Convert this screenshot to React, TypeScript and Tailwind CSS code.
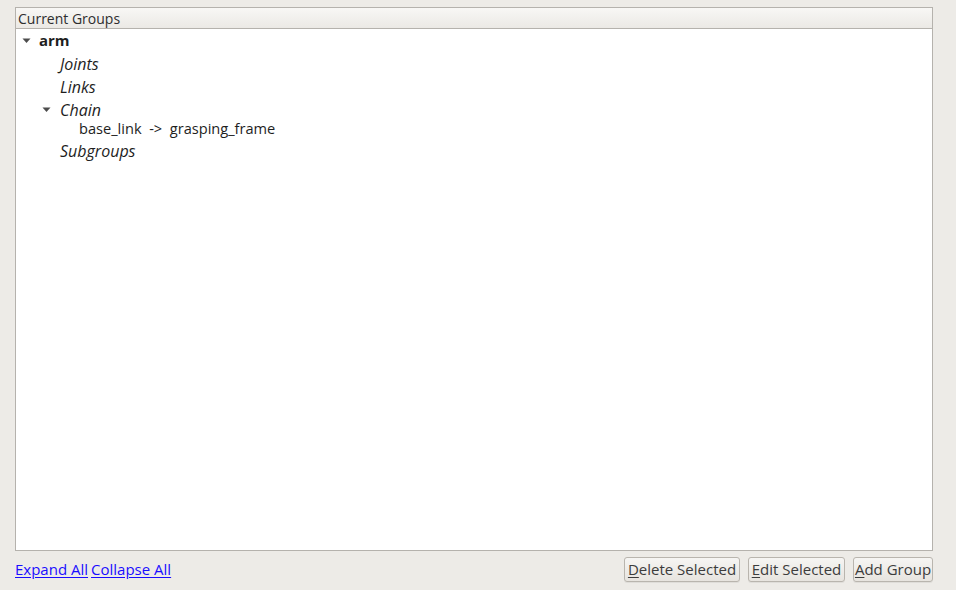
import React from 'react';

const font = { fontFamily: '"Open Sans", "DejaVu Sans", sans-serif' };

function Arrow() {
  return (
    <svg width="9" height="6" viewBox="0 0 9 6" className="shrink-0">
      <path d="M0.5 0.5 L8.5 0.5 L4.5 5 Z" fill="#4c4c4c" />
    </svg>
  );
}

function Row({ indent, arrow, children, h = 23, className = '' }: { indent: number; arrow?: boolean; children: React.ReactNode; h?: number; className?: string }) {
  return (
    <div className={`flex items-center ${className}`} style={{ height: h }}>
      <div className="flex items-center justify-center" style={{ marginLeft: indent, width: 20 }}>
        {arrow && <Arrow />}
      </div>
      {children}
    </div>
  );
}

function Button({ label, u, w }: { label: string; u: string; w: string }) {
  const rest = label.slice(1);
  return (
    <button className={`${w} h-[25px] rounded-[3px] border border-[#b9b5ae] bg-gradient-to-b from-[#f6f5f3] to-[#e7e4df] text-[15px] text-[#3c3c3c] leading-none shadow-[0_1px_0_rgba(0,0,0,0.06)]`}>
      <span className="underline underline-offset-2">{u}</span>
      {rest}
    </button>
  );
}

export default function App() {
  return (
    <div className="w-[956px] h-[590px] bg-[#edebe7] flex flex-col pt-[7px] pl-[15px] pr-[23px]" style={font}>
      <div className="flex flex-col border border-[#b5b2ad] bg-white h-[544px]">
        <div className="h-[21px] flex items-center px-[2px] border-b border-[#b5b2ad] bg-gradient-to-b from-[#f8f7f5] to-[#ebe9e5] text-[14px] text-[#2e2e2e]">
          Current Groups
        </div>
        <div className="text-[16px] text-[#1e1e1e]">
          <Row indent={0} arrow>
            <span className="font-bold ml-[3px] text-[15px]">arm</span>
          </Row>
          <Row indent={20}>
            <span className="italic ml-[4px]">Joints</span>
          </Row>
          <Row indent={20}>
            <span className="italic ml-[4px]">Links</span>
          </Row>
          <Row indent={20} arrow>
            <span className="italic ml-[4px]">Chain</span>
          </Row>
          <Row indent={40} h={19} className="-mt-[2px]">
            <span className="ml-[3px] text-[14.6px]">base_link&nbsp; -&gt;&nbsp; grasping_frame</span>
          </Row>
          <Row indent={20} h={25}>
            <span className="italic ml-[4px]">Subgroups</span>
          </Row>
        </div>
      </div>
      <div className="flex items-start justify-between h-[39px]">
        <div className="flex gap-[3px] text-[15px] text-[#1a0dff] pt-[7px]">
          <span className="underline underline-offset-2">Expand All</span>
          <span className="underline underline-offset-2">Collapse All</span>
        </div>
        <div className="flex gap-[8px] pt-[6px] mr-0">
          <Button label="Delete Selected" u="D" w="w-[116px]" />
          <Button label="Edit Selected" u="E" w="w-[97px]" />
          <Button label="Add Group" u="A" w="w-[80px]" />
        </div>
      </div>
    </div>
  );
}
